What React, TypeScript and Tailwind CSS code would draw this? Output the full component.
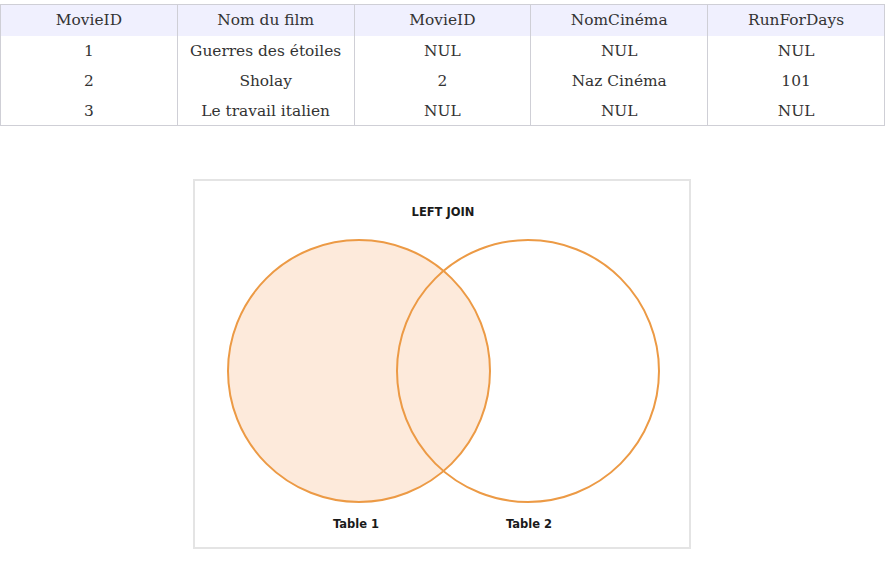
import React from 'react';

const headers = ['MovieID', 'Nom du film', 'MovieID', 'NomCinéma', 'RunForDays'];
const rows = [
  ['1', 'Guerres des étoiles', 'NUL', 'NUL', 'NUL'],
  ['2', 'Sholay', '2', 'Naz Cinéma', '101'],
  ['3', 'Le travail italien', 'NUL', 'NUL', 'NUL'],
];

const LeftJoinDiagram: React.FC = () => (
  <div className="w-[498px] h-[370px] border-2 border-[#e4e4e4] bg-white">
    <svg width="494" height="366" viewBox="0 0 494 366">
      <circle cx="164" cy="190" r="131" fill="#fdeadb" />
      <circle cx="164" cy="190" r="131" fill="none" stroke="#ec9a45" strokeWidth="2" />
      <circle cx="333" cy="190" r="131" fill="none" stroke="#ec9a45" strokeWidth="2" />
      <g fontFamily='"DejaVu Sans", sans-serif' fontWeight="700" fontSize="11.5" fill="#1a1a1a" textAnchor="middle">
        <text x="248" y="35">LEFT JOIN</text>
        <text x="161" y="347">Table 1</text>
        <text x="334" y="347">Table 2</text>
      </g>
    </svg>
  </div>
);

export default function App() {
  return (
    <div className="w-[892px] h-[573px] bg-white pt-[4px]" style={{ fontFamily: '"DejaVu Serif", serif' }}>
      <table className="w-[885px] border-collapse border border-[#cfcfd6] text-[15.4px] text-[#333]">
        <thead>
          <tr className="bg-[#f0f0fe] h-[31px]">
            {headers.map((h, i) => (
              <th key={i} className="font-normal border-x border-[#cfcfd6] text-center w-[177px]">{h}</th>
            ))}
          </tr>
        </thead>
        <tbody>
          {rows.map((r, ri) => (
            <tr key={ri} className="h-[30px]">
              {r.map((c, ci) => (
                <td key={ci} className="border-x border-[#cfcfd6] text-center pt-[2px]">{c}</td>
              ))}
            </tr>
          ))}
        </tbody>
      </table>
      <div className="flex justify-start pl-[193px] pt-[53px]">
        <LeftJoinDiagram />
      </div>
    </div>
  );
}
